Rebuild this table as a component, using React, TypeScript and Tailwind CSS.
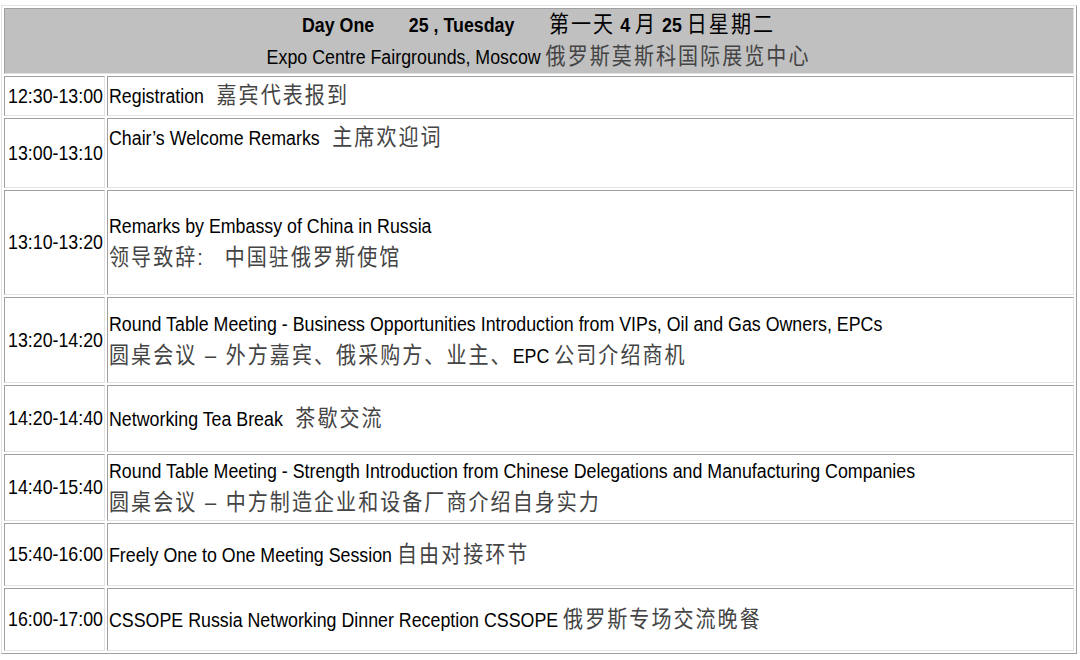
const font = "font-['Liberation_Sans','Noto_Sans_CJK_SC',sans-serif]";

// English text in the shot is a narrow face; squeeze Liberation Sans to match
const narrow = "inline-block whitespace-pre origin-left scale-x-[0.89]";

type Row = { time: string; h: string; content: React.ReactNode };

const zh = (t: string) => <span className="text-[22.5px] tracking-[2.3px] text-[#444]">{t}</span>;

const rows: Row[] = [
  { time: "12:30-13:00", h: "h-[40px]", content: <>Registration {zh(" 嘉宾代表报到")}</> },
  {
    time: "13:00-13:10",
    h: "h-[70px]",
    content: (
      <>
        Chair’s Welcome Remarks {zh(" 主席欢迎词")}
        <br />{" "}
      </>
    ),
  },
  {
    time: "13:10-13:20",
    h: "h-[105px]",
    content: (
      <>
        Remarks by Embassy of China in Russia
        <br />
        {zh("领导致辞:")}
        {"    "}
        {zh("中国驻俄罗斯使馆")}
      </>
    ),
  },
  {
    time: "13:20-14:20",
    h: "h-[86px]",
    content: (
      <>
        Round Table Meeting - Business Opportunities Introduction from VIPs, Oil and Gas Owners, EPCs
        <br />
        {zh("圆桌会议 – 外方嘉宾、俄采购方、业主、")}EPC {zh("公司介绍商机")}
      </>
    ),
  },
  { time: "14:20-14:40", h: "h-[67px]", content: <>Networking Tea Break {zh(" 茶歇交流")}</> },
  {
    time: "14:40-15:40",
    h: "h-[67px]",
    content: (
      <>
        Round Table Meeting - Strength Introduction from Chinese Delegations and Manufacturing Companies
        <br />
        {zh("圆桌会议 – 中方制造企业和设备厂商介绍自身实力")}
      </>
    ),
  },
  { time: "15:40-16:00", h: "h-[63px]", content: <>Freely One to One Meeting Session {zh("自由对接环节")}</> },
  {
    time: "16:00-17:00",
    h: "h-[63px]",
    content: <>CSSOPE Russia Networking Dinner Reception CSSOPE {zh("俄罗斯专场交流晚餐")}</>,
  },
];

const cell =
  "border border-t-[#a0a0a0] border-l-[#a0a0a0] border-r-[#e3e3e3] border-b-[#e3e3e3] align-middle p-0";

export default function App() {
  return (
    <div className={`w-[1080px] h-[660px] bg-white text-black ${font} text-[20px] leading-[31px]`}>
      <table className="table-fixed ml-px mt-[5px] w-[1076px] border-separate border-spacing-[2px] border border-t-[#e3e3e3] border-l-[#e3e3e3] border-r-[#a0a0a0] border-b-[#a0a0a0]">
        <colgroup>
          <col className="w-[101px]" />
          <col />
        </colgroup>
        <tbody>
          <tr>
            <td colSpan={2} className={`${cell} h-[65px] bg-[#c0c0c0] text-center leading-[32px]`}>
              <div className="inline-block whitespace-pre scale-x-[0.89] origin-center">
                <div className="font-bold">
                  {"Day One       25 , Tuesday       "}
                  <span className="font-normal text-[22.5px] tracking-[2.3px]">第一天</span> 4{" "}
                  <span className="font-normal text-[22.5px] tracking-[2.3px]">月</span> 25{" "}
                  <span className="font-normal text-[22.5px] tracking-[2.3px]">日星期二</span>
                </div>
                <div>Expo Centre Fairgrounds, Moscow {zh("俄罗斯莫斯科国际展览中心")}</div>
              </div>
            </td>
          </tr>
          {rows.map((r) => (
            <tr key={r.time}>
              <td className={`${cell} ${r.h} pl-[3px]`}>
                <div className={narrow}>{r.time}</div>
              </td>
              <td className={`${cell} ${r.h} pl-px`}>
                <div className={narrow}>{r.content}</div>
              </td>
            </tr>
          ))}
        </tbody>
      </table>
    </div>
  );
}
